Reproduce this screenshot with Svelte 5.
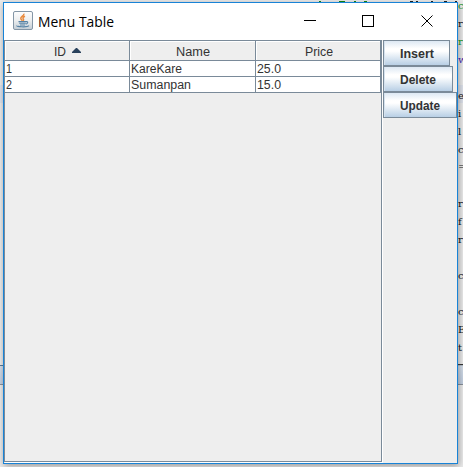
<script>
  const columns = [
    { label: 'ID', width: 12 },
    { label: 'Name', width: 34 },
    { label: 'Price', width: 28 },
  ];
  const rows = [
    [{ v: '1', w: 6 }, { v: 'KareKare', w: 51 }, { v: '25.0', w: 24 }],
    [{ v: '2', w: 6 }, { v: 'Sumanpan', w: 60 }, { v: '15.0', w: 24 }],
  ];
  const buttons = [
    { label: 'Insert', width: 67, text: 34 },
    { label: 'Delete', width: 70, text: 36 },
    { label: 'Update', width: 74, text: 40 },
  ];
  // Editor text that peeks out to the right of the window
  const code = [
    { c: 'c', y: 6, color: '#118a11' },
    { c: 'r', y: 24 },
    { c: 'r', y: 42, color: '#118a11' },
    { c: 'w', y: 60, color: '#3a1aa0' },
    { c: 'e', y: 96 },
    { c: 'i', y: 114 },
    { c: 'l', y: 132 },
    { c: 'c', y: 150 },
    { c: '=', y: 167 },
    { c: 'r', y: 204 },
    { c: 'f', y: 222 },
    { c: 'r', y: 240 },
    { c: 'c', y: 276 },
    { c: 'c', y: 312 },
    { c: 'E', y: 330 },
    { c: 't', y: 348 },
  ];
  // Descenders of the editor line above the window: [x, width, colour]
  const specks = [
    [319, 2, '#118a11'],
    [339, 6, '#118a11'],
    [354, 2, '#118a11'],
    [364, 3, '#118a11'],
    [410, 3, '#222'],
    [416, 2, '#222'],
    [431, 2, '#222'],
    [444, 3, '#222'],
    [455, 2, '#222'],
  ];
</script>

<div class="desktop">
  <div class="caret"></div>
  <svg class="specks" width="463" height="2">
    {#each specks as [x, width, color]}
      <rect {x} y="1" {width} height="1" fill={color} />
    {/each}
  </svg>
  <div class="band left"></div>
  <div class="band right"></div>

  <div class="window">
    <header>
      <svg class="java" width="20" height="20" viewBox="0 0 20 20">
        <defs>
          <linearGradient id="face" x1="0" y1="0" x2="0" y2="1">
            <stop offset="0" stop-color="#fdfdfd" />
            <stop offset="0.5" stop-color="#eceeef" />
            <stop offset="1" stop-color="#c3cdd5" />
          </linearGradient>
        </defs>
        <rect x="0.5" y="0.5" width="19" height="18" rx="1.5" fill="url(#face)" stroke="#8496a6" />
        <path d="M10.8 2.6c1 2-3.6 3-3 5 .2.9 1.1 1.3 1.4 2.1M12 5.3c-2 .9-2.5 1.8-1.6 2.9.4.6.2 1.2-.3 1.7" fill="none" stroke="#e98b3e" stroke-width="1.5" />
        <path d="M5.5 10.6h7.8M6.2 12.3h6.4M7 14h5M13 10.7c2.3-.5 2.4 1.8-.3 2.4" fill="none" stroke="#5682a5" stroke-width="1.1" />
        <path d="M4 14.6c-1.3 1.3 10.5 1.8 12 .1" fill="none" stroke="#5682a5" stroke-width="1.2" />
      </svg>
      <svg class="title" width="90" height="24"><text x="0" y="17" textLength="76" lengthAdjust="spacingAndGlyphs">Menu Table</text></svg>
      <svg class="controls" width="150" height="36" viewBox="0 0 150 36" shape-rendering="crispEdges">
        <path d="M0 17.5h12" stroke="#000" />
        <rect x="58.5" y="12.5" width="11" height="11" fill="none" stroke="#000" />
        <path d="M117.5 12.5l11 11M128.5 12.5l-11 11" stroke="#000" shape-rendering="auto" />
      </svg>
    </header>

    <main>
      <div class="pane">
        <div class="row head">
          {#each columns as column, i}
            <div class="cell">
              <svg width={column.width} height="16"><text x="0" y="12" textLength={column.width} lengthAdjust="spacingAndGlyphs">{column.label}</text></svg>
              {#if i === 0}
                <svg class="sort" width="9" height="5" viewBox="0 0 9 5"><path d="M0 5V4L4 0H5L9 4V5Z" fill="#29415c" /></svg>
              {/if}
            </div>
          {/each}
        </div>
        {#each rows as row}
          <div class="row">
            {#each row as { v, w }}
              <div class="cell">
                <svg width={w + 2} height="15"><text x="0" y="12" textLength={w} lengthAdjust="spacingAndGlyphs">{v}</text></svg>
              </div>
            {/each}
          </div>
        {/each}
      </div>
      <div class="buttons">
        {#each buttons as button}
          <button style="width:{button.width}px">
            <svg width="48" height="22"><text x="0" y="16" textLength={button.text} lengthAdjust="spacingAndGlyphs">{button.label}</text></svg>
          </button>
        {/each}
      </div>
    </main>
  </div>

  {#each code as line}
    <span class="code" style="top:{line.y - 9}px;color:{line.color ?? '#111'}">{line.c}</span>
  {/each}
  <div class="dots"></div>
</div>

<style>
  :global(body) { margin: 0; }
  .desktop {
    position: relative;
    width: 463px;
    height: 467px;
    overflow: hidden;
    box-sizing: border-box;
    padding: 2px 0 0 3px;
    background: #ececec;
    font-family: "Liberation Sans", Arial, sans-serif;
    font-size: 12px;
    color: #333;
  }
  .specks {
    position: absolute;
    left: 0;
    top: 0;
  }
  .band {
    position: absolute;
    top: 365px;
    height: 20px;
    box-sizing: border-box;
    border-top: 1px solid #5b7b97;
    border-bottom: 1px solid #8a929b;
    background: linear-gradient(#d6dfeb, #c3d0e2);
  }
  .left { left: 0; width: 4px; }
  .right { left: 457px; width: 6px; border-top-color: #b5c0cc; }
  .caret {
    position: absolute;
    left: 0;
    top: 85px;
    width: 463px;
    height: 18px;
    background: #dfe3ec;
  }
  .code {
    position: absolute;
    left: 458px;
    font: 10px/18px "DejaVu Serif", "Courier New", serif;
  }
  .dots {
    position: absolute;
    left: 458px;
    top: 364px;
    width: 5px;
    height: 1px;
    background: #333;
  }
  .window {
    position: relative;
    width: 455px;
    height: 462px;
    box-sizing: border-box;
    border: 1px solid #1883d7;
    background: #eee;
    box-shadow: 1px 2px 7px rgba(0, 0, 0, 0.36);
    display: flex;
    flex-direction: column;
  }
  header {
    display: flex;
    height: 37px;
    flex: none;
    background: #fff;
  }
  .java { margin: 8px 0 0 9px; }
  .title {
    margin: 7px 0 0 5px;
    font-family: "Open Sans", "Noto Sans", sans-serif;
    font-size: 14.5px;
    fill: #000;
  }
  .controls { margin-left: 176px; flex: none; }
  main { display: flex; flex: 1; }
  .pane {
    width: 378px;
    height: 422px;
    box-sizing: border-box;
    border: 1px solid #7a8a99;
    box-shadow: 1px 1px 0 #fff;
  }
  .pane text { fill: #333; }
  .row {
    display: grid;
    grid-template-columns: 125px 126px 125px;
    height: 16px;
    background: #fff;
  }
  .cell {
    display: flex;
    box-sizing: border-box;
    border-right: 1px solid #7a8a99;
    border-bottom: 1px solid #7a8a99;
    padding-left: 1px;
  }
  .head { height: 20px; }
  .head .cell {
    align-items: center;
    justify-content: center;
    gap: 6px;
    background: #eee;
    box-shadow: inset 1px 1px 0 #fff;
    padding-top: 2px;
  }
  .head .sort { margin-top: -3px; }
  .buttons {
    display: flex;
    flex-direction: column;
    align-items: flex-start;
    margin-left: 1px;
  }
  button {
    display: flex;
    height: 26px;
    box-sizing: border-box;
    margin: 0;
    padding: 1px 0 0 16px;
    border: 1px solid #7a8a99;
    border-radius: 0;
    box-shadow: inset 1px 0 0 #d5e2ee;
    background: linear-gradient(#dde8f3 0%, #fff 32%, #fff 42%, #b8cfe5 100%);
    overflow: hidden;
  }
  button svg { flex: none; }
  button text {
    font: bold 12px "Liberation Sans", Arial, sans-serif;
    fill: #333;
  }
</style>
